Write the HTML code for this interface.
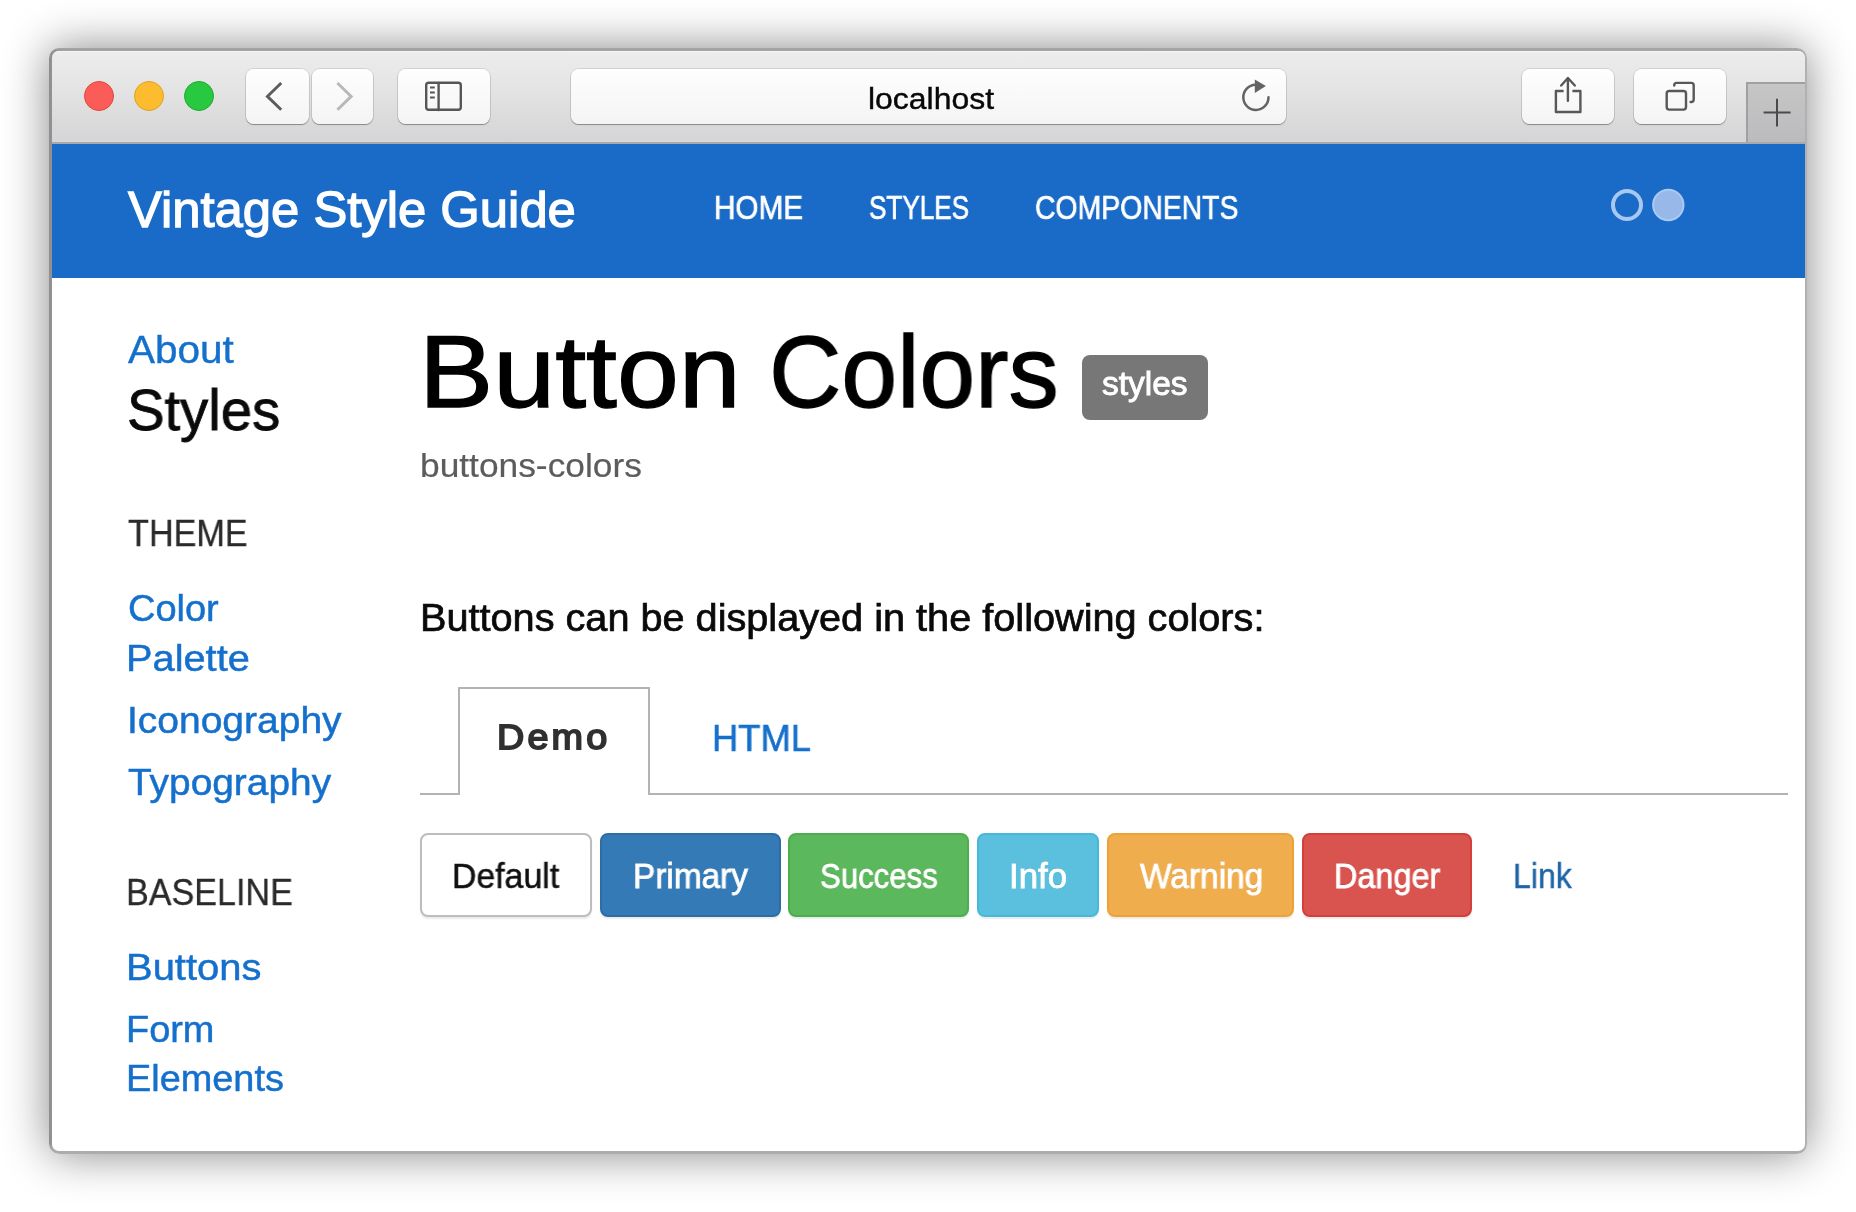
<!DOCTYPE html>
<html lang="en"><head><meta charset="utf-8"><title>Vintage Style Guide</title>
<style>
html,body{margin:0;padding:0;background:#fff;}
body{width:1856px;height:1212px;position:relative;overflow:hidden;font-family:"Liberation Sans",sans-serif;}
.t{will-change:transform;margin:0;font-weight:normal;text-decoration:none;position:absolute;white-space:nowrap;line-height:1;transform-origin:0 0;display:block;}
.b{position:absolute;box-sizing:border-box;}
svg{position:absolute;overflow:visible;}

#win{border-radius:10px;background:linear-gradient(180deg,rgba(172,172,172,0) calc(100% - 12px),#acacac calc(100% - 4px)),linear-gradient(90deg,#8e8e8e,#a2a2a2 12px,#a6a6a6 calc(100% - 12px),#b2b2b2);box-shadow:0 0 46px rgba(0,0,0,.48);}
#page{background:#fff;border-radius:0 0 7px 7px;}
#tb{background:linear-gradient(#ededed,#e3e3e3 45%,#d5d4d6);border-radius:7px 7px 0 0;box-shadow:inset 0 1px 0 #f6f6f6;}
#tbline{background:#a9a9a9;}
.tl{border-radius:50%;}
.cb{border-radius:8px;background:linear-gradient(#fefefe,#f4f4f4);box-shadow:0 0 0 1px rgba(0,0,0,.10),0 1.5px 1px -.5px rgba(0,0,0,.30);}
#plus{background:linear-gradient(#c6c6c6,#bbbabd);border-left:2px solid #a0a0a0;border-top:2px solid #a0a0a0;}
#nav{background:#1a6bc8;}
.btn{border-radius:8px;border:2px solid;box-shadow:0 1.5px 1.5px rgba(0,0,0,.08);}

</style></head><body>
<!-- Safari window chrome -->
<div class="b" id="win" style="left:49px;top:48.4px;width:1757.5px;height:1105.8px;"></div>
<div class="b" id="page" style="left:52px;top:144px;width:1752.8px;height:1006.8px;"></div>
<div class="b" id="tb" style="left:52px;top:50.5px;width:1752.8px;height:91.5px;"></div>
<div class="b" id="tbline" style="left:52px;top:142px;width:1752.8px;height:2px;"></div>
<div class="b tl" style="left:84px;top:81.4px;width:30px;height:30px;background:#fc5c57;border:1.5px solid #e0443f;"></div>
<div class="b tl" style="left:134px;top:81.4px;width:30px;height:30px;background:#fdbc2f;border:1.5px solid #dfa023;"></div>
<div class="b tl" style="left:183.5px;top:81.4px;width:30px;height:30px;background:#29c841;border:1.5px solid #1cac2b;"></div>
<div class="b cb" style="left:245.5px;top:68.7px;width:63.5px;height:55.3px;"></div>
<div class="b cb" style="left:312px;top:68.7px;width:60.5px;height:55.3px;"></div>
<div class="b cb" style="left:397.5px;top:68.7px;width:92px;height:55.3px;"></div>
<div class="b cb" style="left:571px;top:68.7px;width:715px;height:55.3px;"></div>
<div class="b cb" style="left:1521.7px;top:68.7px;width:92.6px;height:55.3px;"></div>
<div class="b cb" style="left:1634px;top:68.7px;width:92.3px;height:55.3px;"></div>
<div class="b" id="plus" style="left:1746px;top:82px;width:58.8px;height:60px;"></div>
<svg width="1856" height="1212" viewBox="0 0 1856 1212" style="left:0;top:0" fill="none" stroke-linecap="round" stroke-linejoin="round">
<path d="M281.2 83 L267.4 96.4 L281.2 109.8" stroke="#5c5c5c" stroke-width="2.9" stroke-linecap="butt" stroke-linejoin="miter"/>
<path d="M337.4 83 L351.2 96.4 L337.4 109.8" stroke="#b8b8b8" stroke-width="2.9" stroke-linecap="butt" stroke-linejoin="miter"/>
<rect x="426.2" y="82.8" width="34.6" height="27" rx="2.5" stroke="#565656" stroke-width="2.4"/>
<path d="M438.6 83 V110" stroke="#565656" stroke-width="2.4"/>
<path d="M430 87.6h4.8M430 92.6h4.8M430 97.6h4.8" stroke="#565656" stroke-width="2" stroke-linecap="butt"/>
<path d="M1763.6 112.6 H1790.6 M1777 98.7 V126.6" stroke="#4a4a4a" stroke-width="2" stroke-linecap="butt"/>
<path d="M1255.5 84.7 A12.6 12.6 0 1 0 1268.5 97.3" stroke="#636363" stroke-width="2.5"/>
<path d="M1254.8 79.4 L1265.9 86 L1254.8 93 Z" fill="#636363" stroke="none"/>
<path d="M1563.6 91 H1555.9 V112 H1580.4 V91 H1572.4" stroke="#585858" stroke-width="2.4" stroke-linecap="butt"/>
<path d="M1567.9 100.8 V78.5 M1561.2 85.5 L1567.9 78 L1574.8 85.5" stroke="#585858" stroke-width="2.4"/>
<rect x="1666.7" y="91" width="19.3" height="18.6" rx="2.5" stroke="#585858" stroke-width="2.4"/>
<path d="M1674.2 85.6 V85.4 a2.5 2.5 0 0 1 2.5 -2.5 H1691.2 a2.5 2.5 0 0 1 2.5 2.5 V99.5 a2.5 2.5 0 0 1 -2.5 2.5 H1690.6" stroke="#585858" stroke-width="2.4"/>
</svg>
<span class="t" style="left:867.94px;top:84.26px;font-size:30px;color:#080808;transform:scaleX(1.0648);-webkit-text-stroke:0.4px #080808;">localhost</span>
<header>
<div class="b" id="nav" style="left:52px;top:144px;width:1752.8px;height:134px;"></div>
<svg width="1856" height="1212" viewBox="0 0 1856 1212" style="left:0;top:0" fill="none"><circle cx="1627" cy="205" r="14" stroke="#a8c8f0" stroke-width="4"/><circle cx="1668.3" cy="205" r="15.2" fill="#97b8e8" stroke="#a8caf4" stroke-width="2"/></svg>
<a class="t" href="#" style="left:127.90px;top:184.95px;font-size:50.5px;color:#fff;transform:scaleX(1.0054);-webkit-text-stroke:1.3px #fff;">Vintage Style Guide</a>
<a class="t" href="#" style="left:713.80px;top:191.47px;font-size:33px;color:#fff;transform:scaleX(0.9001);-webkit-text-stroke:0.7px #fff;">HOME</a>
<a class="t" href="#" style="left:868.78px;top:191.47px;font-size:33px;color:#fff;transform:scaleX(0.7905);-webkit-text-stroke:0.7px #fff;">STYLES</a>
<a class="t" href="#" style="left:1034.63px;top:191.47px;font-size:33px;color:#fff;transform:scaleX(0.8604);-webkit-text-stroke:0.7px #fff;">COMPONENTS</a>
</header>
<aside>
<a class="t" href="#" style="left:128.00px;top:330.91px;font-size:38.5px;color:#1470cc;transform:scaleX(1.0519);-webkit-text-stroke:0.4px #1470cc;">About</a>
<h2 class="t" style="left:126.77px;top:382.05px;font-size:57px;color:#0a0a0a;transform:scaleX(0.9872);-webkit-text-stroke:0.8px #0a0a0a;">Styles</h2>
<h3 class="t" style="left:127.68px;top:515.36px;font-size:37.5px;color:#2a2a2a;transform:scaleX(0.9114);-webkit-text-stroke:0.3px #2a2a2a;">THEME</h3>
<a class="t" href="#" style="left:127.55px;top:589.66px;font-size:37.5px;color:#1470cc;transform:scaleX(1.0128);-webkit-text-stroke:0.5px #1470cc;">Color</a>
<a class="t" href="#" style="left:126.17px;top:639.86px;font-size:37.5px;color:#1470cc;transform:scaleX(1.0604);-webkit-text-stroke:0.5px #1470cc;">Palette</a>
<a class="t" href="#" style="left:126.94px;top:701.66px;font-size:37.5px;color:#1470cc;transform:scaleX(1.0396);-webkit-text-stroke:0.5px #1470cc;">Iconography</a>
<a class="t" href="#" style="left:127.78px;top:763.96px;font-size:37.5px;color:#1470cc;transform:scaleX(1.0364);-webkit-text-stroke:0.5px #1470cc;">Typography</a>
<h3 class="t" style="left:126.44px;top:873.66px;font-size:37.5px;color:#2a2a2a;transform:scaleX(0.9095);-webkit-text-stroke:0.3px #2a2a2a;">BASELINE</h3>
<a class="t" href="#" style="left:126.06px;top:948.66px;font-size:37.5px;color:#1470cc;transform:scaleX(1.0650);-webkit-text-stroke:0.5px #1470cc;">Buttons</a>
<a class="t" href="#" style="left:126.22px;top:1010.96px;font-size:37.5px;color:#1470cc;transform:scaleX(1.0105);-webkit-text-stroke:0.5px #1470cc;">Form</a>
<a class="t" href="#" style="left:126.23px;top:1060.06px;font-size:37.5px;color:#1470cc;transform:scaleX(1.0100);-webkit-text-stroke:0.5px #1470cc;">Elements</a>
</aside>
<main>
<h1 style="margin:0">
<span class="t" style="left:418.67px;top:321.88px;font-size:101.5px;color:#000;transform:scaleX(1.0965);-webkit-text-stroke:1.3px #000;">Button</span>
<span class="t" style="left:768.54px;top:321.88px;font-size:101.5px;color:#000;transform:scaleX(0.9877);-webkit-text-stroke:1.3px #000;">Colors</span>
</h1>
<div class="b " style="left:1082px;top:355.2px;width:126.3px;height:64.8px;background:#777;border-radius:8px;"></div>
<span class="t" style="left:1102.03px;top:366.57px;font-size:33px;color:#fff;transform:scaleX(1.0140);-webkit-text-stroke:0.9px #fff;">styles</span>
<span class="t" style="left:419.70px;top:449.24px;font-size:33.5px;color:#5c5c5c;transform:scaleX(1.0544);-webkit-text-stroke:0.2px #5c5c5c;">buttons-colors</span>
<p class="t" style="left:419.68px;top:599.33px;font-size:38px;color:#0a0a0a;transform:scaleX(1.0437);-webkit-text-stroke:0.7px #0a0a0a;">Buttons can be displayed in the following colors:</p>
<div class="b " style="left:420px;top:793px;width:1368px;height:2px;background:#b3b3b3;"></div>
<div class="b " style="left:458px;top:687px;width:191.5px;height:108px;background:#fff;border:2px solid #b3b3b3;border-bottom:none;"></div>
<span class="t" style="left:497.28px;top:720.30px;font-size:35.8px;color:#303030;transform:scaleX(1.0548);-webkit-text-stroke:1.8px #303030;letter-spacing:3px;">Demo</span>
<a class="t" href="#" style="left:712.10px;top:719.66px;font-size:37.5px;color:#1470cc;transform:scaleX(0.9694);-webkit-text-stroke:0.6px #1470cc;">HTML</a>
<div class="b btn" style="left:420.1px;top:833px;width:172.4px;height:84px;background:#fff;border-color:#bdbdbd;"></div>
<span class="t" style="left:452.26px;top:859.37px;font-size:34.3px;color:#111;transform:scaleX(0.9862);-webkit-text-stroke:0.5px #111;">Default</span>
<div class="b btn" style="left:600.4px;top:833px;width:180.2px;height:84px;background:#337ab7;border-color:#2e6da4;"></div>
<span class="t" style="left:632.55px;top:859.37px;font-size:34.3px;color:#fff;transform:scaleX(0.9727);-webkit-text-stroke:0.8px #fff;text-shadow:0 -1.5px 0 rgba(0,0,0,.2);">Primary</span>
<div class="b btn" style="left:788.3px;top:833px;width:181.1px;height:84px;background:#5cb85c;border-color:#4cae4c;"></div>
<span class="t" style="left:819.90px;top:859.37px;font-size:34.3px;color:#fff;transform:scaleX(0.9085);-webkit-text-stroke:0.8px #fff;text-shadow:0 -1.5px 0 rgba(0,0,0,.2);">Success</span>
<div class="b btn" style="left:977.2px;top:833px;width:121.8px;height:84px;background:#5bc0de;border-color:#46b8da;"></div>
<span class="t" style="left:1008.78px;top:859.37px;font-size:34.3px;color:#fff;transform:scaleX(1.0161);-webkit-text-stroke:0.8px #fff;text-shadow:0 -1.5px 0 rgba(0,0,0,.2);">Info</span>
<div class="b btn" style="left:1106.9px;top:833px;width:187.6px;height:84px;background:#f0ad4e;border-color:#eea236;"></div>
<span class="t" style="left:1140.43px;top:859.37px;font-size:34.3px;color:#fff;transform:scaleX(0.9752);-webkit-text-stroke:0.8px #fff;text-shadow:0 -1.5px 0 rgba(0,0,0,.2);">Warning</span>
<div class="b btn" style="left:1302px;top:833px;width:170.4px;height:84px;background:#d9534f;border-color:#d43f3a;"></div>
<span class="t" style="left:1333.83px;top:859.37px;font-size:34.3px;color:#fff;transform:scaleX(0.9445);-webkit-text-stroke:0.8px #fff;text-shadow:0 -1.5px 0 rgba(0,0,0,.2);">Danger</span>
<a class="t" href="#" style="left:1512.95px;top:859.37px;font-size:34.3px;color:#2065a8;transform:scaleX(0.9349);-webkit-text-stroke:0.4px #2065a8;">Link</a>
</main>
</body></html>
